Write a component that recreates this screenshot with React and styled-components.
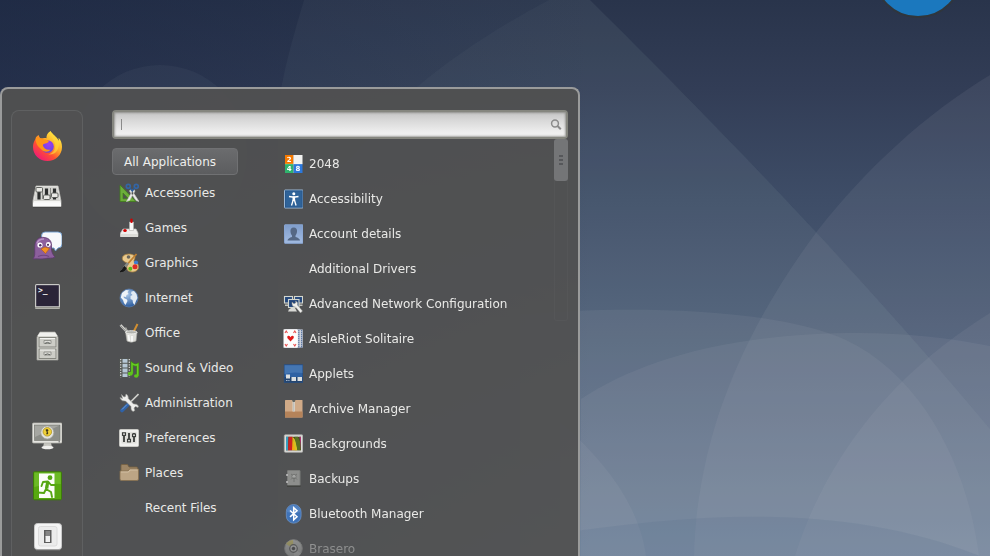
import React, { useState } from 'react';
import styled, { createGlobalStyle } from 'styled-components';

const GlobalStyle = createGlobalStyle`
  * {
    box-sizing: border-box;
  }

  body {
    margin: 0;
    background: #3f4c66;
    font-family: 'DejaVu Sans', 'Noto Sans', sans-serif;
    font-size: 12px;
  }
`;

const Desktop = styled.main`
  position: relative;
  display: flex;
  height: 100vh;
  padding-top: 87px;
  overflow: hidden;
`;

const WallpaperSvg = styled.svg`
  position: absolute;
  inset: 0;
  width: 100%;
  height: 100%;
`;

const Menu = styled.section`
  position: relative;
  display: flex;
  gap: 29px;
  width: 580px;
  max-width: 100%;
  padding: 21px 10px 0 9px;
  border: 2px solid #9a9b9b;
  border-bottom: none;
  border-radius: 8px 8px 0 0;
  background: rgba(81, 81, 81, 0.94);
  overflow: hidden;
`;

const Favorites = styled.nav`
  display: flex;
  flex-direction: column;
  flex: none;
  gap: 40px;
  width: 72px;
  padding-top: 10px;
  border: 1px solid #5f6061;
  border-bottom: none;
  border-radius: 8px 8px 0 0;
  background: rgba(84, 84, 83, 0.6);
`;

const FavoriteGroup = styled.div`
  display: flex;
  flex-direction: column;
`;

const FavoriteButton = styled.button`
  display: flex;
  align-items: center;
  justify-content: center;
  flex: none;
  height: 50px;
  padding: 0;
  border: none;
  background: none;
  cursor: pointer;

  svg {
    width: 30px;
    height: 30px;
  }
`;

const Content = styled.div`
  display: flex;
  flex-direction: column;
  flex: 1;
  min-width: 0;
`;

const SearchBox = styled.label`
  display: flex;
  align-items: center;
  flex: none;
  height: 29px;
  padding-right: 4px;
  border: 2px solid #85867f;
  border-radius: 4px;
  background: linear-gradient(#c4c4c4, #d9d9d9 35%, #eeeeee 80%, #f2f2f2);
  box-shadow: inset 0 0 2px 1px rgba(110, 110, 105, 0.6);

  svg {
    width: 12px;
    height: 12px;
  }
`;

const SearchInput = styled.input`
  flex: 1;
  min-width: 0;
  height: 11px;
  padding: 0 8px;
  border: none;
  outline: none;
  background: linear-gradient(#8a8a8a, #8a8a8a) 7px 0 / 1px 100% no-repeat;
  color: #333;
  font: inherit;
`;

const Columns = styled.div`
  display: flex;
  flex: 1;
  min-height: 0;
`;

const Categories = styled.div`
  flex: none;
  width: 126px;
  padding-top: 9px;
`;

const AllButton = styled.button`
  display: block;
  width: 100%;
  height: 27px;
  padding: 0 11px;
  border: 1px solid #707173;
  border-radius: 4px;
  background: linear-gradient(#6b6c6e, #5c5d5f);
  color: #eeeeec;
  font: inherit;
  text-align: left;
  cursor: pointer;
`;

const List = styled.ul`
  margin: 0;
  padding: 0;
  list-style: none;
`;

const ItemButton = styled.button`
  display: flex;
  align-items: center;
  gap: 6px;
  width: 100%;
  height: 35px;
  padding: 0 0 0 ${props => props.$indent || 0}px;
  border: none;
  background: none;
  color: #e9e9e7;
  font: inherit;
  white-space: nowrap;
  cursor: pointer;

  svg {
    flex: none;
    width: 20px;
    height: 20px;
  }
`;

const Applications = styled.div`
  flex: 1;
  min-width: 0;
  padding: 7px 0 0 45px;
  overflow: hidden;
  mask-image: linear-gradient(#000 calc(100% - 32px), rgba(0, 0, 0, 0.45) calc(100% - 14px), rgba(0, 0, 0, 0.3));
`;

const Track = styled.div`
  flex: none;
  width: 14px;
  height: 182px;
  border-radius: 3px;
  box-shadow: inset 0 0 0 1px rgba(110, 110, 110, 0.14);
`;

const Thumb = styled.div`
  display: flex;
  flex-direction: column;
  align-items: center;
  justify-content: center;
  gap: 2px;
  height: 42px;
  border-radius: 3px;
  background: #747577;
`;

const Grip = styled.span`
  width: 4px;
  height: 2px;
  background: #56575a;
`;

function Wallpaper() {
  return (
    <WallpaperSvg viewBox="0 0 990 556" preserveAspectRatio="xMinYMin slice" aria-hidden="true">
      <defs>
        <linearGradient id="sky" x1="0" y1="0" x2="0" y2="1">
          <stop offset="0" stopColor="#29344b" />
          <stop offset="0.16" stopColor="#323d56" />
          <stop offset="0.36" stopColor="#3e4d67" />
          <stop offset="0.6" stopColor="#4e5e77" />
          <stop offset="1" stopColor="#687c96" />
        </linearGradient>
        <linearGradient id="shade" x1="0" y1="0" x2="1" y2="0">
          <stop offset="0" stopColor="#16223f" stopOpacity="0.5" />
          <stop offset="0.6" stopColor="#16223f" stopOpacity="0" />
        </linearGradient>
      </defs>
      <rect width="990" height="556" fill="url(#sky)" />
      <rect width="990" height="556" fill="url(#shade)" />
      <g fill="#b9c0c8">
        <circle cx="160" cy="152" r="87" fillOpacity="0.05" />
        <path d="M304 0C292 40 282 75 278 110V556H990V429C900 322 790 198 590 0Z" fillOpacity="0.05" />
        <path d="M549 0C500 26 455 55 417 87L330 180V556H990V429C900 322 790 198 590 0Z" fillOpacity="0.04" />
        <path d="M990 75C925 114 865 170 818 230C740 335 697 440 694 556H990Z" fillOpacity="0.09" />
        <path d="M520 314C620 306 770 306 846 340C925 378 968 470 979 556H520Z" fillOpacity="0.09" />
        <path d="M581 399C640 360 730 333 860 333C905 333 950 338 990 346V556H581Z" fillOpacity="0.09" />
        <path d="M560 422C610 465 640 510 646 556H560Z" fillOpacity="0.09" />
        <path d="M990 313C890 375 825 460 795 556H990Z" fillOpacity="0.09" />
        <path d="M560 533C690 515 840 500 980 556H560Z" fill="#50688a" fillOpacity="0.16" />
      </g>
      <circle cx="918" cy="-27" r="44" fill="#1b78be" stroke="#30363c" strokeWidth="2" />
    </WallpaperSvg>
  );
}

const SearchIcon = () => (
  <svg viewBox="0 0 12 12" fill="none" stroke="#8b8b8b">
    <circle cx="5" cy="4.500" r="3.400" strokeWidth="1.500" />
    <path d="M7.500 7L10.800 10.300" strokeWidth="2" />
  </svg>
);

// Favorites, 30px grid

const FirefoxIcon = () => (
  <svg viewBox="0 0 30 30">
    <defs>
      <linearGradient id="ffBody" x1="0.85" y1="0.1" x2="0.2" y2="0.95">
        <stop offset="0" stopColor="#fff14a" />
        <stop offset="0.35" stopColor="#ffb129" />
        <stop offset="0.65" stopColor="#ff5130" />
        <stop offset="1" stopColor="#f0187a" />
      </linearGradient>
      <radialGradient id="ffGlobe" cx="0.6" cy="0.3" r="0.8">
        <stop offset="0" stopColor="#a13cf0" />
        <stop offset="1" stopColor="#5848e0" />
      </radialGradient>
    </defs>
    <path
      d="M18.6 0C15.5 2 14.2 4.500 14.500 7.200C12.500 6.800 10.500 7 9 7.600C7.700 6.900 6.900 5.500 6.600 4C5 5 4 6.300 3.500 8C1.700 10.500 1 13.500 1 16C1 24 7.500 30 15.500 30C23.500 30 30 24 30 16C30 12.500 28.800 8.800 26.500 6.800C26.700 8 26.800 9 26.600 9.900C25 5.500 20.500 4 18.600 0Z"
      fill="url(#ffBody)"
    />
    <circle cx="15.500" cy="15.500" r="6.300" fill="url(#ffGlobe)" />
    <path d="M4 5.500C7 8 9 6.500 12 8.500C15 8.500 17.500 9.600 16.500 11C15 13 11.500 12 10.800 14C11.500 17.500 15 19.500 18.500 18.500C16.500 21.500 11.500 21.500 9 18C5 15 3 11 4 5.500Z" fill="#ff9417" />
    <path d="M18.600 0C18 7 24.500 10 23 17C22 21 19 23 16 23.500C24 24.500 28 18 26.600 10C25 5.500 20.500 4 18.600 0Z" fill="#ffd83a" fillOpacity="0.65" />
  </svg>
);

const MixerIcon = () => (
  <svg viewBox="0 0 30 30">
    <path d="M4 5H26L29 20V25.500H1V20Z" fill="#f5f5f3" stroke="#bcbcb8" strokeWidth="0.8" />
    <path d="M4.500 6H25.500L28 20H2Z" fill="#d5d5d1" />
    <path d="M1 21.500H29V25.500H1Z" fill="#fafafa" />
    <path d="M1 26.300H29" stroke="#3b3c3c" strokeOpacity="0.6" />
    <path d="M7 8V18.500M14.500 7.500V18.500M22.500 7.500V18.500" stroke="#2d2f2f" strokeWidth="3.200" />
    <path d="M10.500 7V18M18.500 7V18" stroke="#777975" strokeWidth="0.800" />
    <g fill="#e9e9e5" stroke="#555753" strokeWidth="0.900">
      <rect x="4" y="6.500" width="6.500" height="4.500" rx="1" />
      <rect x="11.500" y="14" width="6.500" height="4.500" rx="1" />
      <rect x="19.500" y="12" width="6.500" height="4.500" rx="1" />
    </g>
  </svg>
);

const PidginIcon = () => (
  <svg viewBox="0 0 30 30">
    <path d="M13 1H26Q30 1 30 5V13Q30 17 26 17L23.500 20L22 17H13Q9.500 17 9.500 13V5Q9.500 1 13 1Z" fill="#f7f9fb" stroke="#6d9ccf" strokeWidth="0.900" />
    <path d="M1 28C4 24 2 20 3 13C4 8 8 5.500 12 6.500C18 7 20 11 19.500 16C19 21 21 24 23 26C20 28 16 26.500 14 27.500C9 28.500 5 27.500 1 28Z" fill="#8c5f9c" stroke="#5e3a70" strokeWidth="0.800" />
    <path d="M5 12.500C6 9 9 8 12 8" stroke="#b793c3" strokeWidth="1.500" fill="none" />
    <circle cx="8" cy="14" r="2.600" fill="#fff" />
    <circle cx="16.300" cy="13.500" r="2.400" fill="#fff" />
    <circle cx="8.300" cy="14.200" r="1.200" fill="#4d3060" />
    <circle cx="16" cy="13.800" r="1.100" fill="#4d3060" />
    <path d="M9 18L13 16L17.500 17.500L13.500 22.500Z" fill="#f09022" stroke="#b8590f" strokeWidth="0.600" />
    <path d="M6 25.500Q12 23 17 25.500" stroke="#6d457f" strokeWidth="1.200" fill="none" />
  </svg>
);

const TerminalIcon = () => (
  <svg viewBox="0 0 30 30">
    <rect x="3" y="3" width="25" height="25" rx="1.500" fill="#c9c9c6" />
    <path d="M3 26H28V27.500H3Z" fill="#96968f" />
    <rect x="4.200" y="4.200" width="22.600" height="21" fill="#2a2438" />
    <text x="6" y="12" fill="#f0f0f0" fontFamily="DejaVu Sans Mono, monospace" fontSize="8" fontWeight="bold">
      &gt;_
    </text>
  </svg>
);

const CabinetIcon = () => (
  <svg viewBox="0 0 30 30">
    <path d="M8 1H23L26 6V29H5V6Z" fill="#d6d6d0" stroke="#a0a09a" strokeWidth="0.800" />
    <path d="M8 1.500H23L25.500 5H5.500Z" fill="#f1f1ee" />
    <g fill="#cdcdc7" stroke="#7e7f79" strokeWidth="0.900">
      <rect x="7" y="6.500" width="17" height="9.500" />
      <rect x="7" y="18" width="17" height="9.500" />
    </g>
    <path d="M8 7.500H23M8 19H23" stroke="#f4f4f1" />
    <g fill="#deded9" stroke="#8c8d88" strokeWidth="0.900">
      <path d="M12 9.500H19V12.500H12ZM12 21H19V24H12Z" />
      <path d="M13 12.300Q15.500 10.500 18 12.300M13 23.800Q15.500 22 18 23.800" fill="none" stroke="#555753" />
    </g>
  </svg>
);

const LockScreenIcon = () => (
  <svg viewBox="0 0 30 30">
    <path d="M12 22H19L20 26H11Z" fill="#c5c5bf" />
    <ellipse cx="15.500" cy="26.500" rx="6" ry="1.700" fill="#eeeeec" />
    <rect x="0.500" y="2" width="29.500" height="20" rx="1" fill="#e4e4e0" stroke="#b0b0aa" strokeWidth="0.800" />
    <rect x="2.500" y="4" width="25.500" height="15.500" fill="#8b8d88" stroke="#70726c" strokeWidth="0.600" />
    <path d="M3 4.500H27.500L3 16Z" fill="#b7b8b3" fillOpacity="0.6" />
    <circle cx="15.300" cy="11.500" r="6.500" fill="#e3e3df" stroke="#a1a29c" strokeWidth="0.700" />
    <circle cx="15.300" cy="10.800" r="4.300" fill="#efcf38" stroke="#a98c14" strokeWidth="0.700" />
    <path d="M13.800 8.300H15.800L16.500 9.500L15.500 10.800L16.300 12L15.800 13.300H14.200L14.800 11L13.800 9.800Z" fill="#41391a" />
    <path d="M26.500 20.800H28" stroke="#555" strokeWidth="0.900" />
  </svg>
);

const LogoutIcon = () => (
  <svg viewBox="0 0 30 30">
    <rect x="1.500" y="0.800" width="28" height="28" rx="1" fill="#58a811" stroke="#3d7c09" />
    <path d="M2.300 1.600H28.700V13Q16 12 2.300 16Z" fill="#7ac636" fillOpacity="0.600" />
    <path d="M7 2.500H22.500V27H7Z" fill="#fbfdf9" />
    <circle cx="18" cy="6.700" r="2.400" fill="#55a612" />
    <path d="M15.500 11L14 18L19 21L20 26M14 18L12 22L5.500 21.500M9.500 15L11 11L16 10.500L19 14L23.500 14" fill="none" stroke="#55a612" strokeWidth="1.900" strokeLinejoin="round" strokeLinecap="round" />
    <path d="M15.700 10.500L14.700 17.500" stroke="#55a612" strokeWidth="3.200" />
  </svg>
);

const ShutdownIcon = () => (
  <svg viewBox="0 0 30 30">
    <rect x="2.500" y="2.500" width="27" height="26" rx="3" fill="#f4f4f4" stroke="#c9c9c9" />
    <path d="M4 28.800H28" stroke="#8d8d8d" />
    <rect x="6.500" y="5.500" width="18.500" height="19.500" rx="2" fill="#ebebeb" stroke="#d5d5d5" strokeWidth="0.800" />
    <rect x="12" y="9" width="7.500" height="13" fill="#5d5d5d" />
    <rect x="13.500" y="10" width="4.500" height="6" fill="#858585" />
    <rect x="13.500" y="15" width="4.500" height="6" fill="#f0f0f0" />
  </svg>
);

// Categories, 20px grid

const AccessoriesIcon = () => (
  <svg viewBox="0 0 20 20">
    <path d="M1 2L17 18.500H1Z" fill="#6cae3a" stroke="#3f7c1b" strokeWidth="0.800" />
    <path d="M4 10L9.500 15.800H4Z" fill="#50534f" stroke="#3f7c1b" strokeWidth="0.700" />
    <path d="M14.500 6L7.500 18.500L10.500 17.500L16 8ZM12 6L20 18.500L17 17.500L10.500 8Z" fill="#eeeeec" stroke="#c4c5c0" strokeWidth="0.700" />
    <circle cx="9.300" cy="3.300" r="2" fill="none" stroke="#3465a4" strokeWidth="1.700" />
    <circle cx="17.300" cy="3.300" r="2" fill="none" stroke="#3465a4" strokeWidth="1.700" />
    <path d="M11 5L13.300 8L15.500 5" fill="none" stroke="#2c5a96" strokeWidth="1.500" />
  </svg>
);

const GamesIcon = () => (
  <svg viewBox="0 0 20 20">
    <path d="M4 11H17L19 15V18.500H1.500V15Z" fill="#eeeeec" stroke="#c2c2be" strokeWidth="0.700" />
    <path d="M1.500 16H19V19H1.500Z" fill="#dcdcd8" />
    <path d="M10.500 4H14.500V12.500H10.500Z" fill="#f8f8f7" stroke="#b3b4af" strokeWidth="0.600" />
    <path d="M12.500 1.500V4" stroke="#d40000" strokeWidth="2.200" strokeLinecap="round" />
    <ellipse cx="6" cy="12.500" rx="1.800" ry="1.500" fill="#d40000" />
  </svg>
);

const GraphicsIcon = () => (
  <svg viewBox="0 0 20 20">
    <path d="M3.500 4C5 .5 13 0 15.500 3C17 5 14.500 7 15 8.500C17 9 20 11 19.500 14.500C19 19 12.500 20 9.500 18C6.500 16 8.500 12.500 8 10C6 9 2.500 8 3.500 4Z" fill="#e9c98d" stroke="#a87f3c" strokeWidth="0.800" />
    <circle cx="9.500" cy="4" r="1.800" fill="#6a655a" />
    <circle cx="17" cy="9.500" r="2.100" fill="#3b7ed0" />
    <circle cx="16" cy="13.800" r="2.500" fill="#dc2a25" />
    <circle cx="11.300" cy="15.800" r="2" fill="#5cb51c" />
    <path d="M17.500 1L6 14" stroke="#c07f2f" strokeWidth="1.800" />
    <path d="M9 10L5.500 14.500" stroke="#888a85" strokeWidth="2.800" />
    <path d="M5.500 13.500L7 15.500Q5.500 19 1 18.800Q3.500 17.500 5.500 13.500Z" fill="#191919" stroke="#191919" />
  </svg>
);

const InternetIcon = () => (
  <svg viewBox="0 0 20 20">
    <defs>
      <radialGradient id="ocean" cx="0.4" cy="0.3" r="0.7">
        <stop offset="0" stopColor="#a9c6e8" />
        <stop offset="1" stopColor="#2d5d9e" />
      </radialGradient>
    </defs>
    <circle cx="10" cy="10" r="9" fill="url(#ocean)" stroke="#5a7eb0" strokeWidth="0.700" />
    <path d="M3 5L7 2L10 2.500L8.500 4L9.500 6L7.500 7L7 9L4.500 8.500L5 10L8 11.500L8.500 13L6.500 17L5 15L4 12L1.800 9.500Z" fill="#eef3f8" />
    <path d="M12.500 3.500L15 3L17.500 6L18.500 10L17 13L15.500 17L14 15L13.500 12L11.500 11L11.500 8L13.500 7L12 5.500Z" fill="#e2eaf3" />
  </svg>
);

const OfficeIcon = () => (
  <svg viewBox="0 0 20 20">
    <path d="M1.500 2L9 10" stroke="#d3d3cf" strokeWidth="2.500" />
    <path d="M1.500 2.500L8 9.500" stroke="#777975" strokeWidth="0.800" />
    <path d="M18.500 1L14 10" stroke="#d28f31" strokeWidth="2" />
    <path d="M6.500 4.500L10.500 12" stroke="#aaaaa5" strokeWidth="1.500" />
    <path d="M6.500 9H18L17 18Q12 20.500 8 18Z" fill="#deded9" stroke="#aaaaa5" strokeWidth="0.600" />
    <ellipse cx="12.300" cy="9.300" rx="5.700" ry="1.600" fill="#b0b1ac" stroke="#eeeeec" strokeWidth="0.900" />
    <path d="M9.500 12L10.300 18M13 13V18.500" stroke="#f9f9f8" strokeWidth="1.800" />
  </svg>
);

const SoundVideoIcon = () => (
  <svg viewBox="0 0 20 20">
    <rect x="0.500" y="0.500" width="11" height="19" fill="#535652" />
    <path d="M1.700 1V19.500M10.300 1V19.500" stroke="#d8d8d5" strokeWidth="1.200" strokeDasharray="1.300 1.300" />
    <path d="M3.500 1H8.500V4.800H3.500ZM3.500 5.800H8.500V9.600H3.500ZM3.500 10.600H8.500V14.400H3.500ZM3.500 15.400H8.500V19H3.500Z" fill="#b6c7d5" />
    <path d="M13 15.500V5.500Q16 8 18.700 6.500V18" fill="none" stroke="#3f9310" strokeWidth="2.600" />
    <path d="M13 15.500V5.500Q16 8 18.700 6.500V18" fill="none" stroke="#68cc23" strokeWidth="1.500" />
    <ellipse cx="11.300" cy="15.800" rx="2.500" ry="2" fill="#5fc31b" />
    <ellipse cx="17.200" cy="18" rx="2.200" ry="1.700" fill="#5fc31b" />
  </svg>
);

const AdministrationIcon = () => (
  <svg viewBox="0 0 20 20">
    <path d="M19.500 1L8 12.500" stroke="#cfd0cc" strokeWidth="1.600" />
    <path d="M8.500 12L3 17.500" stroke="#2f62a8" strokeWidth="3.600" strokeLinecap="round" />
    <path d="M8 11.500L3 16.500" stroke="#79a6de" strokeWidth="0.900" />
    <path
      d="M2.500 1.500L5 4L6.500 3.500L7 1Q9.500 2 9.300 5.500L14.500 11Q18 10.500 19.500 13L19 14.500L16.500 13.500L15 15L15.800 17.500L14 18.500Q11.500 17 12 13.500L6.500 8Q3 8.500 1.500 6L1 4.500L3.500 5.500Z"
      fill="#eeeeec"
      stroke="#9b9c98"
      strokeWidth="0.600"
    />
  </svg>
);

const PreferencesIcon = () => (
  <svg viewBox="0 0 20 20">
    <rect x="0.500" y="1.500" width="19" height="17" rx="1" fill="#f0f0ee" stroke="#c8c8c4" />
    <rect x="2.500" y="4" width="15" height="11.500" fill="#dededa" />
    <path d="M5 5V14M10 5V14M15 5V14" stroke="#3a3c3a" strokeWidth="1.800" />
    <g fill="#d8d8d5" stroke="#3a3c3a" strokeWidth="1.100">
      <rect x="3.500" y="4.800" width="3" height="2.600" />
      <rect x="8.500" y="11.300" width="3" height="2.600" />
      <rect x="13.500" y="6" width="3" height="2.600" />
    </g>
  </svg>
);

const PlacesIcon = () => (
  <svg viewBox="0 0 20 20">
    <path d="M2 2.500Q2 1.500 3 1.500H8.500L10 4H17.500Q18.500 4 18.500 5V15H2Z" fill="#9c8566" stroke="#76603f" strokeWidth="0.800" />
    <path d="M1 8H9L10.500 6H19.500V16Q19.500 17.500 18 17.500H2.500Q1 17.500 1 16Z" fill="#bca585" stroke="#86704f" strokeWidth="0.800" />
    <path d="M2 9H9.500L11 7H18.600" fill="none" stroke="#d8c6ab" strokeWidth="0.800" />
  </svg>
);

// Applications, 20px grid

const Game2048Icon = () => (
  <svg viewBox="0 0 20 20">
    <path d="M2 1H10.500V10H2Z" fill="#f57900" />
    <path d="M10.500 1H19.500V10H10.500Z" fill="#f2f2f0" />
    <path d="M2 10H10.500V19H2Z" fill="#2fb36d" />
    <path d="M10.500 10H19.500V19H10.500Z" fill="#2c78dc" />
    <path d="M10.500 1V19M2 10H19.500" stroke="#fff" strokeOpacity="0.400" strokeWidth="0.600" />
    <g fill="#fff" fontFamily="DejaVu Sans, sans-serif" fontSize="7" fontWeight="bold" textAnchor="middle">
      <text x="6.200" y="8">2</text>
      <text x="6.200" y="17">4</text>
      <text x="15" y="17">8</text>
    </g>
  </svg>
);

const AccessibilityIcon = () => (
  <svg viewBox="0 0 20 20">
    <rect x="1.500" y="1" width="18.500" height="18" rx="0.500" fill="#2f6399" stroke="#9db9d6" strokeWidth="1" />
    <rect x="2.500" y="2" width="16.500" height="16" fill="none" stroke="#28588c" strokeWidth="0.800" />
    <circle cx="10.800" cy="4.800" r="1.500" fill="#fff" />
    <path d="M6 7.500L9.500 8H12.100L15.500 7.500M10.200 11L8.500 16.500M11.400 11L13.100 16.500" stroke="#fff" strokeWidth="1.300" fill="none" />
    <path d="M9.500 7.500H12.100V12H9.500Z" fill="#fff" />
  </svg>
);

const AccountIcon = () => (
  <svg viewBox="0 0 20 20">
    <defs>
      <linearGradient id="account" x1="0" y1="0" x2="0" y2="1">
        <stop offset="0" stopColor="#7f9dcb" />
        <stop offset="1" stopColor="#a3bce2" />
      </linearGradient>
    </defs>
    <rect x="1.500" y="0.800" width="18.500" height="18.500" rx="0.500" fill="url(#account)" stroke="#89a5d2" />
    <path d="M10.700 3.500Q14.500 3.500 14 8Q13.500 10.500 12.500 11.500V13Q16.500 14 17 16.500H4.500Q5 14 9 13V11.500Q7.800 10.500 7.500 8Q7 3.500 10.700 3.500Z" fill="#556885" />
  </svg>
);

const NetworkIcon = () => (
  <svg viewBox="0 0 20 20">
    <g fill="#23467a" stroke="#d3d7cf" strokeWidth="1.100">
      <rect x="1.500" y="2.500" width="8" height="6.500" />
      <rect x="11.500" y="2.500" width="8" height="6.500" />
      <rect x="5.500" y="5.500" width="10.500" height="8" />
    </g>
    <path d="M2 10.500H5V12H2ZM16 10.500H19.500V12H16Z" fill="#c2c4be" />
    <path d="M8 14H12L14 17.500H5L6 15.500Z" fill="#d8d9d5" />
    <path d="M9 8L11 9.800L12.800 8.800L12.500 7Q15.500 8 14.500 11L19.500 17L17.500 19L12.500 13Q9.500 13.500 9 10Z" fill="#eeeeec" stroke="#888a85" strokeWidth="0.500" />
  </svg>
);

const SolitaireIcon = () => (
  <svg viewBox="0 0 20 20">
    <g fill="#e7e9ee" stroke="#8d97aa" strokeWidth="0.500">
      <rect x="5" y="0.500" width="14.800" height="18" rx="0.500" />
      <rect x="2" y="0.500" width="15" height="18" rx="0.500" />
    </g>
    <path d="M15.800 1V18.500M18.600 1V18.500" stroke="#5f7ba4" strokeWidth="1.300" strokeDasharray="1.500 0.500" />
    <rect x="0.500" y="0.300" width="14" height="18.500" rx="0.500" fill="#fdfdfd" />
    <path d="M7.500 12.500L4.300 9Q3.800 6.500 5.800 6.700Q7 6.900 7.500 8.200Q8 6.900 9.300 6.700Q11.200 6.500 10.800 9Z" fill="#e01b1b" />
    <path d="M2 4L3.200 2L4.500 4M10.500 4L11.800 2L13 4M2 15L3.200 17L4.500 15M10.500 15L11.800 17L13 15" fill="none" stroke="#e65050" strokeWidth="1.100" />
  </svg>
);

const AppletsIcon = () => (
  <svg viewBox="0 0 20 20">
    <rect x="1.300" y="0.800" width="18.500" height="17.500" fill="#2f62a4" stroke="#244e86" strokeWidth="0.800" />
    <path d="M1.500 1.300H19.500V9Q9 7.500 1.500 10Z" fill="#5583bd" fillOpacity="0.600" />
    <path d="M1.500 13H19.500V18.300H1.500Z" fill="#24456f" />
    <g fill="#dcdfe0">
      <rect x="3" y="10.500" width="4" height="4" />
      <rect x="8.500" y="13" width="4.500" height="4" />
      <rect x="14.500" y="13" width="4.500" height="4" />
    </g>
    <path d="M3 16.500H4.500M5.300 16.500H6.500" stroke="#a7b8cd" />
  </svg>
);

const ArchiveIcon = () => (
  <svg viewBox="0 0 20 20">
    <rect x="2" y="1" width="17.500" height="17.500" rx="0.500" fill="#d0aa88" />
    <path d="M2 12.500H19.500V18.500H2Z" fill="#b5835a" />
    <path d="M10.700 1V12.500" stroke="#dfdfdb" strokeWidth="2.200" />
    <path d="M10.700 1V12.500" stroke="#a9aaa5" strokeWidth="0.700" />
    <path d="M9 1H12.500L11.700 3H9.800Z" fill="#64655f" />
  </svg>
);

const BackgroundsIcon = () => (
  <svg viewBox="0 0 20 20">
    <rect x="1.300" y="0.800" width="18.500" height="17.500" rx="1" fill="#ddddda" stroke="#aaaaa7" strokeWidth="0.800" />
    <rect x="3" y="2.800" width="15" height="13.500" fill="#3e3e22" />
    <path d="M3 2.800H5.500L5 16.300H3Z" fill="#3a9dbd" />
    <path d="M5.500 2.800H9.500L9 16.300H5Z" fill="#cc2222" />
    <path d="M9.500 2.800L13.500 16.300H9Z" fill="#f7a712" />
    <path d="M9.500 2.800Q13.500 5 14.500 16.300H12Z" fill="#d3c322" />
    <path d="M11.500 2.800H15L17.700 9V16.300H14.500Z" fill="#587022" />
    <path d="M16.300 2.800H18V16.300Q17.500 8 16.300 2.800Z" fill="#a5346b" />
  </svg>
);

const BackupsIcon = () => (
  <svg viewBox="0 0 20 20">
    <rect x="4.500" y="1.500" width="12.500" height="15" rx="0.500" fill="#8d8e8c" stroke="#7b7c7a" />
    <path d="M4 16.500H17.500V18H4Z" fill="#41423f" />
    <path d="M4 5V7M4 12V14" stroke="#d8d8d8" strokeWidth="1.200" />
    <circle cx="11" cy="7.500" r="2.200" fill="#a4a5a3" stroke="#757674" />
    <path d="M11 8V13M8 5L9.500 6M14 5L12.500 6M8 10.500L9.500 9M14 10.500L12.500 9" stroke="#6b6c6a" strokeWidth="0.800" />
  </svg>
);

const BluetoothIcon = () => (
  <svg viewBox="0 0 20 20">
    <rect x="3.300" y="0.500" width="14.800" height="18.700" rx="7.300" fill="#3f73b8" stroke="#7199ce" strokeWidth="0.700" />
    <path d="M4 8Q4.500 1.500 10.500 1.500Q17 1.500 17.500 8Q10.500 10 4 8Z" fill="#6a95cd" fillOpacity="0.500" />
    <path d="M7 6.500L14 12.700L10.700 15.700V3.700L14 6.700L7 12.900" fill="none" stroke="#fff" strokeWidth="1.500" />
  </svg>
);

const BraseroIcon = () => (
  <svg viewBox="0 0 20 20">
    <circle cx="10.500" cy="9.500" r="8.800" fill="#d2d3d0" stroke="#aeafac" />
    <path d="M10.500 9.500L3 5Q5.500 1.500 10 1Z" fill="#e6d974" />
    <path d="M10.500 9.500L18 14.500Q15.500 18 11 18.300Z" fill="#efefed" />
    <circle cx="10.500" cy="9.500" r="3.800" fill="#eeeeec" stroke="#5f605d" strokeWidth="1.200" />
    <circle cx="10.500" cy="9.500" r="1.700" fill="#3d3e40" />
  </svg>
);

const NoIcon = () => <svg viewBox="0 0 20 20" />;

const favorites = [
  { name: 'Firefox', icon: FirefoxIcon },
  { name: 'Sound mixer', icon: MixerIcon },
  { name: 'Pidgin', icon: PidginIcon },
  { name: 'Terminal', icon: TerminalIcon },
  { name: 'Files', icon: CabinetIcon },
];

const sessionActions = [
  { name: 'Lock screen', icon: LockScreenIcon },
  { name: 'Log out', icon: LogoutIcon },
  { name: 'Shut down', icon: ShutdownIcon },
];

const categories = [
  { name: 'Accessories', icon: AccessoriesIcon },
  { name: 'Games', icon: GamesIcon },
  { name: 'Graphics', icon: GraphicsIcon },
  { name: 'Internet', icon: InternetIcon },
  { name: 'Office', icon: OfficeIcon },
  { name: 'Sound & Video', icon: SoundVideoIcon },
  { name: 'Administration', icon: AdministrationIcon },
  { name: 'Preferences', icon: PreferencesIcon },
  { name: 'Places', icon: PlacesIcon },
  { name: 'Recent Files', icon: NoIcon },
];

const applications = [
  { name: '2048', icon: Game2048Icon },
  { name: 'Accessibility', icon: AccessibilityIcon },
  { name: 'Account details', icon: AccountIcon },
  { name: 'Additional Drivers', icon: NoIcon },
  { name: 'Advanced Network Configuration', icon: NetworkIcon },
  { name: 'AisleRiot Solitaire', icon: SolitaireIcon },
  { name: 'Applets', icon: AppletsIcon },
  { name: 'Archive Manager', icon: ArchiveIcon },
  { name: 'Backgrounds', icon: BackgroundsIcon },
  { name: 'Backups', icon: BackupsIcon },
  { name: 'Bluetooth Manager', icon: BluetoothIcon },
  { name: 'Brasero', icon: BraseroIcon },
];

function FavoriteList({ items }) {
  return (
    <FavoriteGroup>
      {items.map(({ name, icon: Icon }) => (
        <FavoriteButton key={name} aria-label={name}>
          <Icon />
        </FavoriteButton>
      ))}
    </FavoriteGroup>
  );
}

function ItemList({ items, indent }) {
  return (
    <List>
      {items.map(({ name, icon: Icon }) => (
        <li key={name}>
          <ItemButton $indent={indent}>
            <Icon />
            {name}
          </ItemButton>
        </li>
      ))}
    </List>
  );
}

function App() {
  const [query, setQuery] = useState('');
  const shown = applications.filter(app => app.name.toLowerCase().includes(query.toLowerCase()));

  return (
    <>
      <GlobalStyle />
      <Desktop>
        <Wallpaper />
        <Menu>
          <Favorites>
            <FavoriteList items={favorites} />
            <FavoriteList items={sessionActions} />
          </Favorites>
          <Content>
            <SearchBox>
              <SearchInput
                type="text"
                aria-label="Search"
                value={query}
                onChange={e => setQuery(e.target.value)}
              />
              <SearchIcon />
            </SearchBox>
            <Columns>
              <Categories>
                <AllButton onClick={() => setQuery('')}>All Applications</AllButton>
                <ItemList items={categories} indent={7} />
              </Categories>
              <Applications>
                <ItemList items={shown} />
              </Applications>
              <Track>
                <Thumb>
                  <Grip />
                  <Grip />
                  <Grip />
                </Thumb>
              </Track>
            </Columns>
          </Content>
        </Menu>
      </Desktop>
    </>
  );
}

export default App;
